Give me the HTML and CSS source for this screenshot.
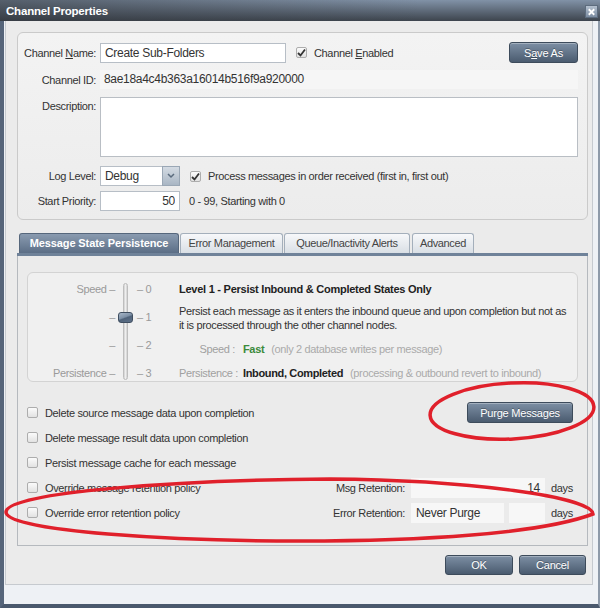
FILE: index.html
```html
<!DOCTYPE html>
<html lang="en">
<head>
    <meta charset="UTF-8">
    <title>Channel Properties</title>
    <link rel="stylesheet" href="styles.css">
</head>
<body>
    <div class="window">
        <div class="titlebar">
            <span class="title">Channel Properties</span>
            <span class="close-btn">
                <svg width="12" height="12" viewBox="0 0 12 12"><path d="M3 3 L9 9 M9 3 L3 9" stroke="#fff" stroke-width="2"/></svg>
            </span>
        </div>
        <div class="frame">
            <div class="dialog">
                <div class="panel general">
                    <div class="row row-name">
                        <span class="lbl">Channel <u>N</u>ame:</span>
                        <input type="text" class="field name-field" value="Create Sub-Folders">
                        <span class="check checked"><svg width="9" height="9" viewBox="0 0 9 9"><path d="M1 5 L3.5 7.5 L8 1.5" fill="none" stroke="#333" stroke-width="1.8"/></svg></span>
                        <span class="check-text">Channel <u>E</u>nabled</span>
                        <button class="btn save-btn">S<u>a</u>ve As</button>
                    </div>
                    <div class="row row-id">
                        <span class="lbl">Channel ID:</span>
                        <span class="id-value">8ae18a4c4b363a16014b516f9a920000</span>
                    </div>
                    <div class="row row-desc">
                        <span class="lbl">Description:</span>
                        <textarea class="desc-field"></textarea>
                    </div>
                    <div class="row row-log">
                        <span class="lbl">Log Level:</span>
                        <div class="select">
                            <span class="select-value">Debug</span>
                            <span class="select-arrow"><svg width="8" height="6" viewBox="0 0 8 6"><path d="M1 1 L4 4 L7 1" fill="none" stroke="#5a6b7e" stroke-width="1.5"/></svg></span>
                        </div>
                        <span class="check checked"><svg width="9" height="9" viewBox="0 0 9 9"><path d="M1 5 L3.5 7.5 L8 1.5" fill="none" stroke="#333" stroke-width="1.8"/></svg></span>
                        <span class="check-text">Process messages in order received (first in, first out)</span>
                    </div>
                    <div class="row row-priority">
                        <span class="lbl">Start Priority:</span>
                        <input type="text" class="field priority-field" value="50">
                        <span class="hint">0 - 99, Starting with 0</span>
                    </div>
                </div>

                <div class="tabs">
                    <span class="tab active tab-msp">Message State Persistence</span>
                    <span class="tab tab-err">Error Management</span>
                    <span class="tab tab-queue">Queue/Inactivity Alerts</span>
                    <span class="tab tab-adv">Advanced</span>
                </div>
                <div class="tab-content">
                    <div class="persist-box">
                        <div class="slider-left">
                            <span>Speed &ndash;</span>
                            <span>&ndash;</span>
                            <span>&ndash;</span>
                            <span>Persistence &ndash;</span>
                        </div>
                        <div class="slider-track">
                            <div class="track"></div>
                            <div class="thumb"></div>
                        </div>
                        <div class="slider-right">
                            <span>&ndash; 0</span>
                            <span>&ndash; 1</span>
                            <span>&ndash; 2</span>
                            <span>&ndash; 3</span>
                        </div>
                        <div class="level-info">
                            <div class="level-title">Level 1 - Persist Inbound &amp; Completed States Only</div>
                            <div class="level-desc">Persist each message as it enters the inbound queue and upon completion but not as it is processed through the other channel nodes.</div>
                            <div class="level-stat stat-speed">
                                <span class="stat-lbl">Speed :</span>
                                <span class="stat-fast">Fast</span>
                                <span class="stat-note">(only 2 database writes per message)</span>
                            </div>
                            <div class="level-stat">
                                <span class="stat-lbl">Persistence :</span>
                                <span class="stat-val">Inbound, Completed</span>
                                <span class="stat-note">(processing &amp; outbound revert to inbound)</span>
                            </div>
                        </div>
                    </div>

                    <div class="options">
                        <div class="opt-row">
                            <span class="check"></span>
                            <span class="check-text">Delete source message data upon completion</span>
                            <button class="btn purge-btn">Purge Messages</button>
                        </div>
                        <div class="opt-row">
                            <span class="check"></span>
                            <span class="check-text">Delete message result data upon completion</span>
                        </div>
                        <div class="opt-row">
                            <span class="check"></span>
                            <span class="check-text">Persist message cache for each message</span>
                        </div>
                        <div class="opt-row">
                            <span class="check"></span>
                            <span class="check-text">Override message retention policy</span>
                            <div class="retention">
                                <span class="ret-lbl">Msg Retention:</span>
                                <span class="ret-field ret-wide num">14</span>
                                <span class="days">days</span>
                            </div>
                        </div>
                        <div class="opt-row">
                            <span class="check"></span>
                            <span class="check-text">Override error retention policy</span>
                            <div class="retention">
                                <span class="ret-lbl">Error Retention:</span>
                                <span class="ret-field ret-mode">Never Purge</span>
                                <span class="ret-field ret-days"></span>
                                <span class="days">days</span>
                            </div>
                        </div>
                    </div>
                </div>

                <div class="footer">
                    <button class="btn ok-btn">OK</button>
                    <button class="btn cancel-btn">Cancel</button>
                </div>
            </div>
        </div>

        <!-- hand drawn red marks over the screenshot -->
        <svg class="marks" width="600" height="608" viewBox="0 0 600 608">
            <ellipse cx="512" cy="411" rx="82" ry="28" transform="rotate(-3 512 411)" fill="none" stroke="#e0202b" stroke-width="3.5"/>
            <path d="M330 479 C180 480 6 492 6 512 C6 532 180 541 300 541 C420 541 540 534 593 514 C592 497 470 480 330 479 Z" fill="none" stroke="#e0202b" stroke-width="3.5"/>
        </svg>
    </div>
</body>
</html>
```

FILE: styles.css
```css
body {
    margin: 0;
    font-family: "Liberation Sans", Arial, sans-serif;
    font-size: 11px;
    letter-spacing: -0.35px;
    color: #333;
    background: #fff;
}
.window {
    position: relative;
    width: 600px;
    height: 608px;
    display: flex;
    flex-direction: column;
}
.titlebar {
    height: 21px;
    flex: none;
    display: flex;
    align-items: center;
    justify-content: space-between;
    padding: 0 2px 0 6px;
    background: linear-gradient(to right, rgba(50, 54, 60, 0.55), rgba(50, 54, 60, 0) 70%),
                linear-gradient(#8192a7, #3d444d);
}
.title {
    color: #fff;
    font-weight: bold;
    font-size: 11.5px;
    letter-spacing: -0.2px;
}
.close-btn {
    width: 13px;
    height: 13px;
    display: flex;
    align-items: center;
    justify-content: center;
    background: linear-gradient(#b5c1cf, #7c8da2);
    border: 1px solid #5d6c7e;
    box-sizing: border-box;
    margin-top: 2px;
}
.frame {
    flex: 1;
    background: #eef1f5;
    border-left: 4px solid #56657a;
    border-right: 2px solid #8e9aa9;
    border-bottom: 4px solid #4a596d;
    padding: 0 5px 19px 1px;
    display: flex;
}
.dialog {
    flex: 1;
    background: #ebebeb;
    border: 1px solid #c6cacf;
    border-top: none;
    padding: 11px 4px 0 11px;
}

/* general panel */
.panel {
    border: 1px solid #cacaca;
    border-radius: 6px;
    background: linear-gradient(#f3f3f3, #ececec);
}
.general {
    height: 188px;
    box-sizing: border-box;
    padding: 9px 9px 0 0;
}
.row {
    display: flex;
    align-items: center;
}
.lbl {
    width: 78px;
    flex: none;
    text-align: right;
    margin-right: 4px;
}
.field {
    height: 20px;
    box-sizing: border-box;
    border: 1px solid #b7bec6;
    background: #fff;
    font-family: "Liberation Sans", Arial, sans-serif;
    font-size: 12px;
    letter-spacing: -0.3px;
    color: #333;
    padding: 0 4px;
    margin: 0;
}
.row-name { height: 21px; }
.name-field { width: 186px; }
.row-name .check { margin-left: 10px; }
.save-btn { margin-left: auto; width: 69px; height: 21px; }
.row-id { margin-top: 7px; height: 19px; }
.id-value {
    width: 478px;
    height: 19px;
    line-height: 19px;
    background: #f6f6f6;
    padding-left: 4px;
    box-sizing: border-box;
    font-size: 12px;
    letter-spacing: -0.3px;
}
.row-desc { margin-top: 8px; align-items: flex-start; }
.row-desc .lbl { margin-top: 3px; }
.desc-field {
    width: 478px;
    height: 60px;
    box-sizing: border-box;
    border: 1px solid #b9bec4;
    background: #fff;
    resize: none;
    margin: 0;
}
.row-log { margin-top: 9px; height: 20px; }
.select {
    display: flex;
    width: 80px;
    height: 20px;
}
.select-value {
    flex: 1;
    border: 1px solid #b7bec6;
    border-right: none;
    background: #fff;
    font-size: 12px;
    letter-spacing: -0.3px;
    line-height: 18px;
    padding-left: 4px;
}
.select-arrow {
    width: 16px;
    display: flex;
    align-items: center;
    justify-content: center;
    border: 1px solid #9aa7b5;
    background: linear-gradient(#d4dbe3, #a9b6c4);
}
.row-log .check { margin-left: 10px; }
.row-priority { margin-top: 5px; height: 20px; }
.priority-field { width: 80px; text-align: right; }
.hint { margin-left: 9px; }

.check {
    width: 11px;
    height: 11px;
    flex: none;
    box-sizing: border-box;
    border: 1px solid #adadad;
    border-radius: 2px;
    background: linear-gradient(#fbfbfb, #e2e2e2);
    display: flex;
    align-items: center;
    justify-content: center;
    margin-right: 7px;
}

/* buttons */
.btn {
    font-family: "Liberation Sans", Arial, sans-serif;
    font-size: 11px;
    letter-spacing: -0.2px;
    color: #fff;
    background: linear-gradient(#7d8fa4, #4a5b6f);
    border: 1px solid #3d4b5b;
    border-radius: 3px;
    box-shadow: inset 0 1px 0 rgba(255, 255, 255, 0.3);
    text-shadow: 0 -1px 0 rgba(0, 0, 0, 0.3);
    padding: 0;
    cursor: pointer;
}

/* tabs */
.tabs {
    margin-top: 13px;
    display: flex;
    align-items: flex-end;
    padding-left: 2px;
    border-bottom: 3px solid #6f8299;
    height: 20px;
}
.tab {
    height: 20px;
    box-sizing: border-box;
    line-height: 18px;
    text-align: center;
    border: 1px solid #a4afbb;
    border-bottom: none;
    border-radius: 3px 3px 0 0;
    background: linear-gradient(#f7f8fa, #d9dfe5);
    color: #444;
    margin-right: 1px;
}
.tab.active {
    background: linear-gradient(#8a9bb0, #5b6e86);
    border-color: #56677c;
    color: #fff;
    font-weight: bold;
    letter-spacing: -0.1px;
}
.tab-msp { width: 160px; }
.tab-err { width: 103px; }
.tab-queue { width: 126px; }
.tab-adv { width: 62px; margin-left: 1px; }

.tab-content {
    height: 290px;
    box-sizing: border-box;
    border: 1px solid #b5b9be;
    border-top: none;
    padding: 16px 9px 0 9px;
}
.persist-box {
    height: 110px;
    box-sizing: border-box;
    border: 1px solid #d3d3d3;
    border-radius: 6px;
    background: #f0f0f0;
    padding-top: 9px;
    display: flex;
}
.slider-left, .slider-right {
    display: flex;
    flex-direction: column;
    gap: 14px;
    color: #9a9a9a;
}
.slider-left span, .slider-right span {
    height: 14px;
    line-height: 14px;
}
.slider-left {
    width: 87px;
    text-align: right;
    padding-right: 2px;
}
.slider-track {
    position: relative;
    width: 17px;
    height: 98px;
}
.track {
    width: 5px;
    height: 97px;
    margin: 1px 0 0 6px;
    box-sizing: border-box;
    border: 1px solid #bdbdbd;
    border-radius: 3px;
    background: linear-gradient(to right, #cfcfcf, #eeeeee, #d0d0d0);
}
.thumb {
    position: absolute;
    left: 1px;
    top: 30px;
    width: 15px;
    height: 11px;
    box-sizing: border-box;
    border: 1px solid #3f4e60;
    border-radius: 3px;
    background: linear-gradient(160deg, #a9b8c9 0%, #7d90a6 45%, #4f6279 55%, #5f728a 100%);
}
.slider-right {
    width: 42px;
    padding-left: 3px;
}
.level-info {
    flex: 1;
}
.level-title {
    height: 14px;
    line-height: 14px;
    font-weight: bold;
    color: #222;
    letter-spacing: -0.25px;
}
.level-desc {
    margin-top: 8px;
    line-height: 14px;
    width: 388px;
}
.level-stat {
    display: flex;
    height: 14px;
    line-height: 14px;
    margin-top: 10px;
    white-space: nowrap;
}
.stat-lbl {
    width: 56px;
    text-align: right;
    color: #a0a0a0;
    margin-right: 8px;
}
.stat-fast { font-weight: bold; color: #3b8a3b; }
.stat-val { font-weight: bold; color: #222; }
.stat-note { color: #aaa; margin-left: 7px; }

.options {
    margin-top: 18px;
    padding-right: 5px;
}
.opt-row {
    height: 25px;
    display: flex;
    align-items: center;
}
.purge-btn {
    margin-left: auto;
    width: 106px;
    height: 21px;
}
.retention {
    margin-left: auto;
    display: flex;
    align-items: center;
}
.ret-lbl {
    width: 90px;
    text-align: right;
    margin-right: 6px;
}
.ret-field {
    height: 20px;
    line-height: 20px;
    background: #f7f7f7;
    box-sizing: border-box;
    padding: 0 5px;
    font-size: 12px;
    letter-spacing: -0.3px;
}
.ret-wide { width: 134px; }
.num { text-align: right; }
.ret-mode { width: 93px; }
.ret-days { width: 36px; margin-left: 5px; }
.days {
    width: 22px;
    margin-left: 6px;
}

.footer {
    margin-top: 9px;
    display: flex;
    justify-content: flex-end;
    gap: 6px;
    padding-right: 2px;
}
.ok-btn { width: 68px; height: 20px; }
.cancel-btn { width: 67px; height: 20px; }

.marks {
    position: absolute;
    left: 0;
    top: 0;
    pointer-events: none;
}
```
